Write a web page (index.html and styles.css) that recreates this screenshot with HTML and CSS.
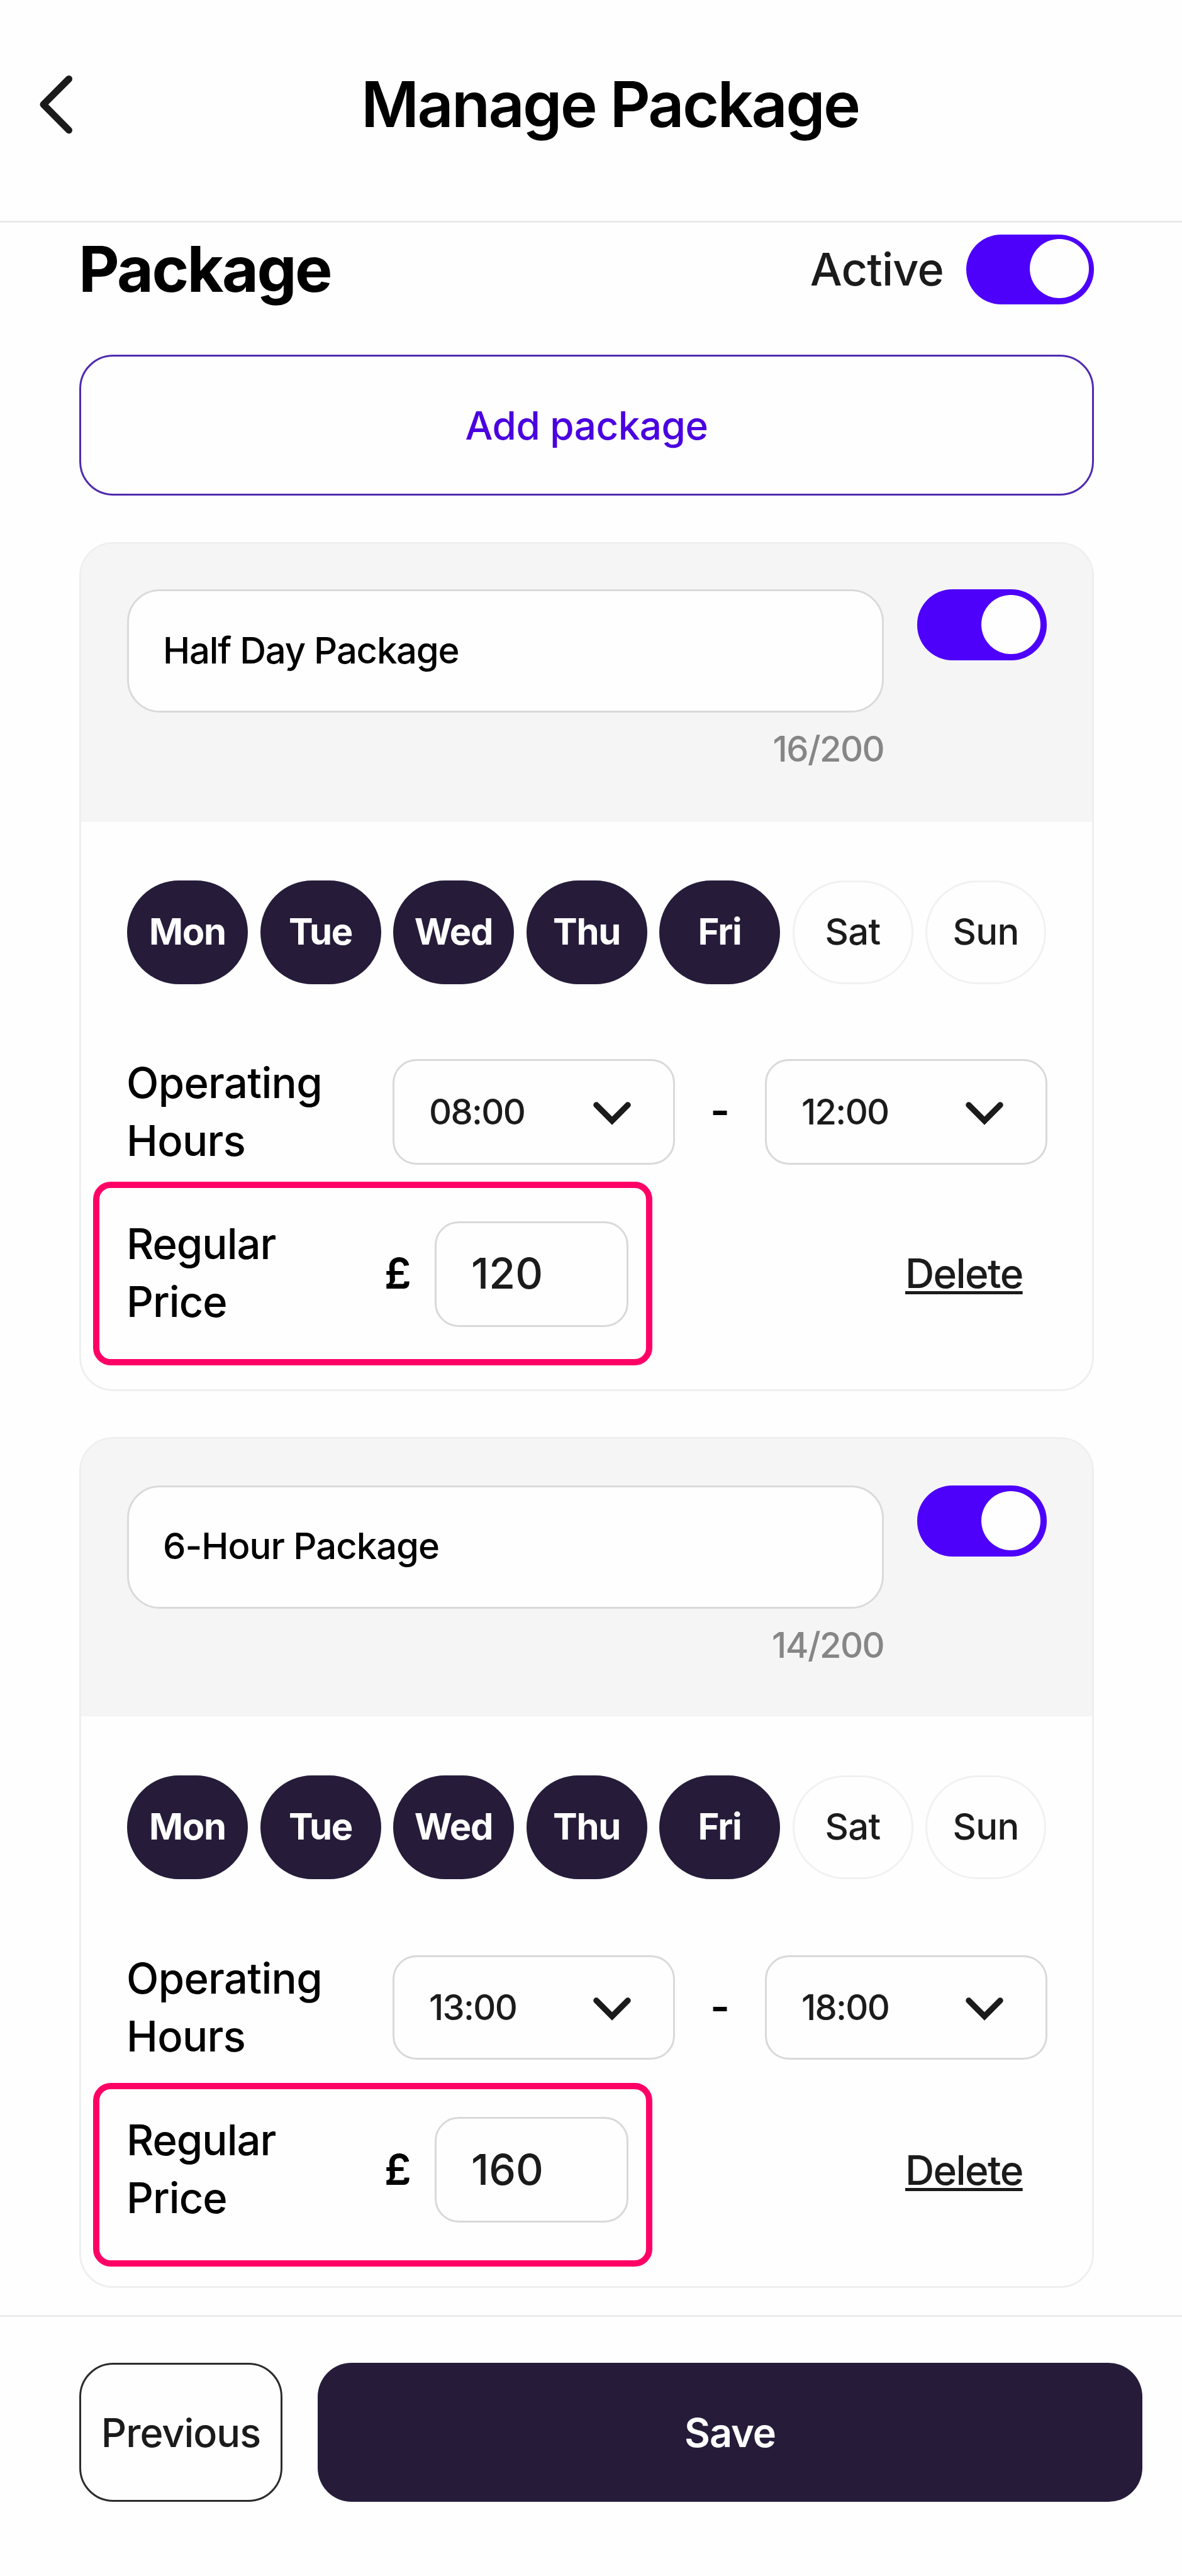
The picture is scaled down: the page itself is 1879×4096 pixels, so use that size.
FILE: index.html
```html
<!DOCTYPE html>
<html lang="en">
<head>
<meta charset="utf-8">
<title>Manage Package</title>
<link rel="stylesheet" href="styles.css">
</head>
<body>
<header class="topbar">
  <svg class="back" viewBox="0 0 54 94"><path d="M47.5 6.5 L7 47.2 L47.5 88"/></svg>
  <h1 class="title">Manage Package</h1>
</header>
<main class="content">
  <div class="section-head">
    <h2 class="section-title">Package</h2>
    <div class="status"><span class="status-label">Active</span><span class="toggle"><span class="knob"></span></span></div>
  </div>
  <button class="add">Add package</button>

  <section class="card">
    <div class="card-head">
      <div class="name-col">
        <div class="name-field">Half Day Package</div>
        <div class="counter">16/200</div>
      </div>
      <span class="toggle toggle-lg"><span class="knob"></span></span>
    </div>
    <div class="days">
      <span class="day on">Mon</span><span class="day on">Tue</span><span class="day on">Wed</span><span class="day on">Thu</span><span class="day on">Fri</span><span class="day">Sat</span><span class="day">Sun</span>
    </div>
    <div class="hours">
      <div class="label">Operating<br>Hours</div>
      <div class="select"><span>08:00</span><svg class="chev" viewBox="0 0 60 38"><path d="M5 5 L30 30 L55 5"/></svg></div>
      <span class="dash">-</span>
      <div class="select"><span>12:00</span><svg class="chev" viewBox="0 0 60 38"><path d="M5 5 L30 30 L55 5"/></svg></div>
    </div>
    <div class="price-row">
      <div class="price-box">
        <div class="label price-label">Regular<br>Price</div>
        <span class="currency">£</span>
        <div class="price-field">120</div>
      </div>
      <a class="delete">Delete</a>
    </div>
  </section>

  <section class="card second">
    <div class="card-head">
      <div class="name-col">
        <div class="name-field">6-Hour Package</div>
        <div class="counter">14/200</div>
      </div>
      <span class="toggle toggle-lg"><span class="knob"></span></span>
    </div>
    <div class="days">
      <span class="day on">Mon</span><span class="day on">Tue</span><span class="day on">Wed</span><span class="day on">Thu</span><span class="day on">Fri</span><span class="day">Sat</span><span class="day">Sun</span>
    </div>
    <div class="hours">
      <div class="label">Operating<br>Hours</div>
      <div class="select"><span>13:00</span><svg class="chev" viewBox="0 0 60 38"><path d="M5 5 L30 30 L55 5"/></svg></div>
      <span class="dash">-</span>
      <div class="select"><span>18:00</span><svg class="chev" viewBox="0 0 60 38"><path d="M5 5 L30 30 L55 5"/></svg></div>
    </div>
    <div class="price-row">
      <div class="price-box">
        <div class="label price-label">Regular<br>Price</div>
        <span class="currency">£</span>
        <div class="price-field">160</div>
      </div>
      <a class="delete">Delete</a>
    </div>
  </section>
</main>
<footer class="footer">
  <button class="prev">Previous</button>
  <button class="save">Save</button>
</footer>
</body>
</html>
```
FILE: styles.css
```css
* { box-sizing: border-box; }
body {
  margin: 0;
  width: 1879px;
  height: 4096px;
  display: flex;
  flex-direction: column;
  background: #fefefe;
  color: #000;
  font-family: Inter, "Liberation Sans", sans-serif;
  overflow: hidden;
  white-space: nowrap;
}
button { font-family: inherit; padding: 0; margin: 0; }

.topbar {
  height: 354px;
  flex: none;
  display: grid;
  grid-template-columns: 54px 1fr;
  padding: 0 0 0 62px;
  border-bottom: 3px solid #ebebeb;
}
.back { width: 54px; height: 94px; margin-top: 119px; fill: none; stroke: #1b1b1b; stroke-width: 11; stroke-linecap: round; stroke-linejoin: round; }
.title { margin: 106px 0 0 458px; font-size: 100px; line-height: 120px; font-weight: 600; letter-spacing: -2.8px; }

.content { flex: none; height: 3327px; padding: 19px 140px 0 126px; }
.section-head { display: flex; justify-content: space-between; align-items: center; height: 111px; }
.section-title { margin: -2px 0 0 -1px; font-size: 100px; line-height: 111px; font-weight: 700; letter-spacing: -2.6px; }
.status { display: flex; align-items: center; gap: 36px; }
.status-label { margin-top: -2px; font-size: 72px; line-height: 111px; font-weight: 450; color: #1b1b1b; letter-spacing: -0.8px; }

.toggle { display: flex; flex: none; width: 203px; height: 111px; padding: 7px 8px; justify-content: flex-end; border-radius: 56px; background: #4d00fa; }
.knob { width: 94px; height: 94px; border-radius: 50%; background: #fefefe; }
.toggle-lg { width: 206px; height: 113px; padding: 9px 10px; }

.add { display: block; width: 1613px; height: 224px; margin-top: 80px; border: 3px solid #4f2ab0; border-radius: 54px; background: transparent; color: #4a00e0; font-size: 62px; font-weight: 500; letter-spacing: -0.5px; }

.card { width: 1613px; height: 1350px; margin-top: 74px; border: 3px solid #efefef; border-radius: 54px; overflow: hidden; }
.card-head { display: flex; justify-content: space-between; align-items: flex-start; height: 442px; padding: 72px 72px 0 73px; background: #f5f5f5; }
.name-col { width: 1203px; }
.name-field { display: flex; align-items: center; height: 196px; padding: 0 0 3px 54px; border: 3px solid #dadada; border-radius: 52px; background: #fefefe; font-size: 58px; font-weight: 450; letter-spacing: -1.2px; }
.counter { margin-top: 24px; text-align: right; font-size: 56px; line-height: 68px; font-weight: 450; color: #868686; letter-spacing: -1.6px; }

.days { display: grid; grid-template-columns: repeat(7, 192px); justify-content: space-between; margin: 93px 73px 0 73px; }
.day { display: flex; align-items: center; justify-content: center; height: 165px; padding-bottom: 3px; border-radius: 83px; border: 3px solid #f1f1f1; color: #1b1b1b; font-size: 58px; font-weight: 500; letter-spacing: -0.7px; }
.on { background: #261c3a; border-color: #261c3a; color: #fefefe; font-weight: 650; letter-spacing: -1.3px; }

.hours { display: grid; grid-template-columns: 422px 449px 143px 449px; margin: 119px 0 0 73px; height: 168px; }
.label { font-size: 67px; line-height: 92px; font-weight: 530; margin: -8px 0 0 -1px; letter-spacing: -0.7px; }
.select { display: flex; align-items: center; justify-content: space-between; height: 168px; padding: 0 67px 0 55px; border: 3px solid #d9d9d9; border-radius: 38px; font-size: 56px; font-weight: 450; color: #1b1b1b; letter-spacing: -1.7px; }
.chev { width: 60px; height: 38px; margin-top: 6px; fill: none; stroke: #1b1b1b; stroke-width: 9.5; stroke-linecap: round; }
.dash { text-align: center; font-size: 67px; line-height: 164px; font-weight: 600; }

.price-row { display: flex; margin: 27px 0 0 19px; }
.price-box { display: grid; grid-template-columns: 409px 80px 308px; width: 889px; height: 292px; padding: 53px 0 0 44px; border: 10px solid #ff0066; border-radius: 28px; }
.price-label { margin-top: -10px; letter-spacing: -1px; }
.currency { font-size: 68px; line-height: 164px; font-weight: 600; }
.price-field { height: 168px; padding-left: 55px; border: 3px solid #d9d9d9; border-radius: 38px; font-size: 68px; line-height: 158px; font-weight: 500; color: #1b1b1b; }
.delete { align-self: flex-start; margin: 102px 0 0 402px; font-size: 64px; line-height: 88px; font-weight: 450; color: #1b1b1b; letter-spacing: -1.6px; text-decoration: underline; text-decoration-thickness: 5px; text-underline-offset: 5px; }

.second { height: 1353px; margin-top: 73px; }
.second .card-head { height: 441px; padding-top: 74px; }
.second .name-field { padding-bottom: 5px; letter-spacing: -1px; }
.second .days { margin-top: 94px; }
.second .hours { margin-top: 121px; height: 166px; }
.second .label { margin-top: -9px; }
.second .select { height: 166px; }
.second .price-row { margin-top: 37px; }
.second .price-box { padding-top: 44px; }
.second .currency { line-height: 166px; }
.second .price-field { line-height: 160px; }
.second .delete { margin-top: 95px; }

.footer { flex: none; height: 415px; display: flex; gap: 56px; padding: 73px 0 0 126px; border-top: 3px solid #ebebeb; }
.prev, .save { height: 221px; border-radius: 54px; font-size: 63px; font-weight: 500; letter-spacing: -1px; }
.prev { width: 323px; border: 3px solid #2b2b2b; background: transparent; color: #1b1b1b; }
.save { width: 1311px; border: 0; background: #261c3a; color: #fefefe; font-weight: 600; }
```
